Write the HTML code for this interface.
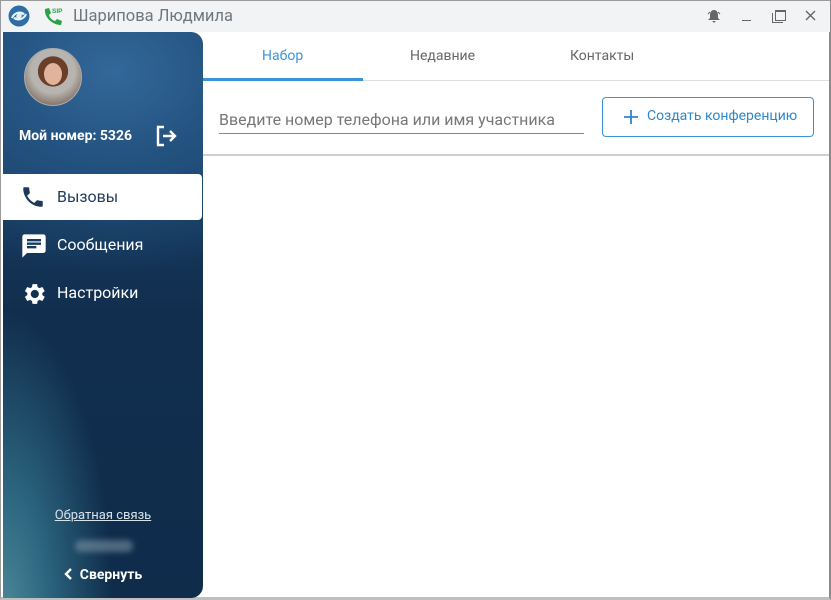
<!DOCTYPE html>
<html><head><meta charset="utf-8"><style>
*{margin:0;padding:0;box-sizing:border-box}
body{width:831px;height:600px;overflow:hidden;background:#fff;font-family:"Roboto","Liberation Sans",sans-serif;position:relative}
.win{position:absolute;left:0;top:0;width:831px;height:600px;border:1px solid #9a9a9a;border-right:2px solid #8a8a8a;border-bottom:3px solid #bfbfbf;background:#fff}
.title{position:absolute;left:0;top:0;width:829px;height:31px;background:#f1f3f5}
.title .name{position:absolute;left:72px;top:6px;font-size:16.5px;color:#6e7780}
.side{position:absolute;left:2px;top:31px;width:200px;height:566px;border-radius:0 12px 12px 0;overflow:hidden;
background:radial-gradient(ellipse 260px 200px at 110px 40px,#33689a 0%,#255482 40%,rgba(20,55,90,0) 100%),radial-gradient(ellipse 110px 300px at 0px 580px,#4a8898 0%,#2c6680 40%,rgba(20,50,80,0) 100%),linear-gradient(#1b4a75,#112e4e 50%,#0f2c4b)}
.av{position:absolute;left:21px;top:16px;width:58px;height:58px;border-radius:50%;background:radial-gradient(circle at 50% 40%,#d9a98f 0 16%,#6a3e28 17% 34%,#b8b4b0 35% 50%,#8a7a70 75%);border:1px solid #aaa}
.num{position:absolute;left:16px;top:96px;color:#fff;font-size:14px;font-weight:bold}
.menu{position:absolute;left:0;width:199px;height:46px;color:#fff;font-size:16px}
.menu span{position:absolute;left:54px;top:13px}
.menu svg{position:absolute;left:17px;top:10px}
.act{background:#fff;color:#1e3a5a;border-radius:0 4px 4px 0}
.fb{position:absolute;left:0;width:200px;text-align:center;top:476px;color:#d8e2ea;font-size:13px;text-decoration:underline}
.blur{position:absolute;left:72px;top:508px;width:58px;height:12px;border-radius:6px;background:#8fa3b3;filter:blur(3px);opacity:.5}
.col{position:absolute;left:0;width:200px;text-align:center;top:535px;color:#fff;font-size:14px;font-weight:bold}
.tab{position:absolute;top:47px;font-size:14px;color:#666}
.tabline{position:absolute;left:202px;top:79px;width:626px;height:1px;background:#ddd}
.ul{position:absolute;left:202px;top:77px;width:160px;height:3px;background:#3a93d8}
.inp{position:absolute;left:218px;top:109px;width:365px;height:24px;border-bottom:1px solid #888;color:#777;font-size:16px}
.btn{position:absolute;left:601px;top:96px;width:212px;height:40px;border:1px solid #3a93d8;border-radius:4px;color:#2f86c9;font-size:14px}
.btn span{position:absolute;left:44px;top:10px}
.sep{position:absolute;left:202px;top:153px;width:626px;height:2px;background:#cfcfcf}
</style></head><body>
<div class="win">
<div class="title">
<svg style="position:absolute;left:7px;top:4px" width="22" height="22" viewBox="0 0 22 22"><circle cx="11" cy="11" r="10.5" fill="#2f6da3"/><path d="M4 13c2-5 8-7 12-4-3-1-6 0-7 3M18 9c-2 5-8 7-12 4 3 1 6 0 7-3" stroke="#e6f2fa" stroke-width="2.2" fill="none"/></svg>
<svg style="position:absolute;left:41px;top:4px" width="22" height="22" viewBox="0 0 22 22"><path d="M3 4l4-1 2 5-2 2c1 3 3 5 6 6l2-2 5 2-1 4C10 20 2 12 3 4z" fill="#2aa346"/><text x="10" y="8" font-size="6.5" font-weight="bold" fill="#2aa346" font-family="Liberation Sans">SIP</text></svg>
<div class="name">Шарипова Людмила</div>
<svg style="position:absolute;left:706px;top:8px" width="14" height="14" viewBox="0 0 14 14"><path d="M7 1c-3 0-4 3-4 5v3l-2 2h12l-2-2V6c0-2-1-5-4-5zM5.5 12a1.5 1.5 0 003 0z" fill="#666"/><path d="M1 5l2-2M13 5l-2-2" stroke="#666"/></svg>
<div style="position:absolute;left:741px;top:19px;width:9px;height:1px;background:#666"></div>
<div style="position:absolute;left:774px;top:9px;width:11px;height:11px;border:1.5px solid #666;border-top-width:2px"></div>
<div style="position:absolute;left:771px;top:12px;width:11px;height:10px;border-left:1.5px solid #666;border-bottom:1.5px solid #666"></div>
<svg style="position:absolute;left:804px;top:9px" width="11" height="11"><path d="M1 1l9 9M10 1l-9 9" stroke="#666" stroke-width="1.4"/></svg>
</div>
<div class="side">
<div class="av"><div style="position:absolute;left:19px;top:14px;width:18px;height:22px;border-radius:50%;background:#e0b49a"></div></div>
<div class="num">Мой номер: 5326</div>
<svg style="position:absolute;left:153px;top:93px" width="22" height="22" viewBox="0 0 22 22"><path d="M8 2H2v18h6" stroke="#fff" stroke-width="2.4" fill="none"/><path d="M7 11h12M14 6l5 5-5 5" stroke="#fff" stroke-width="2.4" fill="none"/></svg>
<div class="menu act" style="top:142px"><svg width="26" height="26" viewBox="0 0 24 24"><path d="M6.6 10.8c1.4 2.8 3.8 5.1 6.6 6.6l2.2-2.2c.3-.3.7-.4 1-.2 1.1.4 2.300.6 3.6.6.6 0 1 .4 1 1V20c0 .6-.4 1-1 1C10.6 21 3 13.4 3 4c0-.6.4-1 1-1h3.5c.6 0 1 .4 1 1 0 1.3.2 2.5.6 3.6.1.3 0 .7-.2 1z" fill="#1e3a5a"/></svg><span>Вызовы</span></div>
<div class="menu" style="top:190px"><svg width="28" height="28" viewBox="0 0 24 24"><path d="M20 2H4c-1.1 0-2 .9-2 2v18l4-4h14c1.1 0 2-.9 2-2V4c0-1.1-.9-2-2-2zM6 9h12v2H6zm8 5H6v-2h8zm4-6H6V6h12z" fill="#fff"/></svg><span>Сообщения</span></div>
<div class="menu" style="top:238px"><svg width="28" height="28" viewBox="0 0 24 24"><path d="M19.1 12.9a7 7 0 000-1.8l2.1-1.6-2-3.5-2.5 1a7 7 0 00-1.6-.9L14.7 3.5h-4l-.4 2.6a7 7 0 00-1.6.9l-2.5-1-2 3.5 2.1 1.6a7 7 0 000 1.8l-2.1 1.6 2 3.5 2.5-1c.5.4 1 .7 1.6.9l.4 2.6h4l.4-2.6c.6-.2 1.1-.5 1.600-.9l2.5 1 2-3.5zM12.7 15.5a3.5 3.5 0 110-7 3.5 3.5 0 010 7z" fill="#fff"/></svg><span>Настройки</span></div>
<div class="fb">Обратная связь</div>
<div class="blur"></div>
<div class="col"><svg width="10" height="12" style="vertical-align:-1px;margin-right:6px"><path d="M7 1L2 6l5 5" stroke="#fff" stroke-width="2.4" fill="none"/></svg>Свернуть</div>
</div>
<div class="tab" style="left:261px;color:#3a93d8">Набор</div>
<div class="tab" style="left:409px">Недавние</div>
<div class="tab" style="left:569px">Контакты</div>
<div class="tabline"></div><div class="ul"></div>
<div class="inp">Введите номер телефона или имя участника</div>
<div class="btn"><svg style="position:absolute;left:20px;top:11px" width="16" height="16"><path d="M8 1v14M1 8h14" stroke="#2f86c9" stroke-width="1.8"/></svg><span>Создать конференцию</span></div>
<div class="sep"></div>
</div>
</body></html>
